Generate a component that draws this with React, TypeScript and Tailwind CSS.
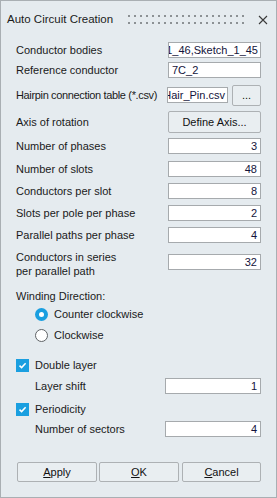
import React from "react";

const font = { fontFamily: '"Liberation Sans", Arial, sans-serif' };

const Field: React.FC<{ value: string; left?: boolean; className?: string }> = ({ value, left, className }) => (
  <div
    className={`h-[16px] shrink-0 border border-[#a6aaad] bg-white flex items-center overflow-hidden whitespace-nowrap text-[11px] text-[#14143c] ${
      left ? "justify-start pl-[3px]" : "justify-end pr-[3px]"
    } ${className ?? "w-[93px]"}`}
  >
    {value}
  </div>
);

const ClipField: React.FC<{ value: string; className: string }> = ({ value, className }) => (
  <div
    className={`h-[16px] shrink-0 border border-[#a6aaad] bg-white flex items-center justify-end overflow-hidden whitespace-nowrap text-[11px] text-[#14143c] pr-[2px] ${className}`}
  >
    {value}
  </div>
);

const Btn: React.FC<{ children: React.ReactNode; className?: string }> = ({ children, className }) => (
  <div
    className={`shrink-0 flex items-center justify-center border border-[#adb1b4] rounded-[2px] bg-[#e9eef1] text-[11px] text-[#111] ${className ?? ""}`}
  >
    {children}
  </div>
);

const Row: React.FC<{ label: string; children: React.ReactNode; className?: string; labelClass?: string }> = ({
  label,
  children,
  className,
  labelClass,
}) => (
  <div className={`flex items-center justify-between ${className ?? ""}`}>
    <span className={`whitespace-nowrap ${labelClass ?? ""}`}>{label}</span>
    {children}
  </div>
);

const Check = () => (
  <div className="w-[13px] h-[13px] bg-[#1a9fe0] flex items-center justify-center">
    <svg width="9" height="9" viewBox="0 0 9 9">
      <path d="M1.5 4.6 L3.6 6.6 L7.6 2.2" fill="none" stroke="white" strokeWidth="1.5" />
    </svg>
  </div>
);

export default function App() {
  return (
    <div
      className="w-[277px] h-[498px] bg-[#e5ebef] border border-[#a9afb3] flex flex-col text-[11px] text-[#1a1a1a] overflow-hidden"
      style={font}
    >
      {/* title bar */}
      <div className="h-[37px] flex items-center pl-[6px] pr-[8px] shrink-0">
        <span className="text-[11.5px] text-[#1b1b1b]">Auto Circuit Creation</span>
        <div className="ml-[15px] grid grid-cols-[repeat(20,2px)] gap-x-[4px] gap-y-[5px]">
          {Array.from({ length: 40 }).map((_, i) => (
            <div key={i} className="w-[2px] h-[2px] bg-[#8c9194]" />
          ))}
        </div>
        <svg className="ml-auto" width="10" height="10" viewBox="0 0 10 10">
          <path d="M1 1 L9 9 M9 1 L1 9" stroke="#3a3a3a" strokeWidth="1.1" />
        </svg>
      </div>

      <div className="flex flex-col px-[15px] pr-[15px]">
        <Row label="Conductor bodies" className="mt-[4px] h-[16px]">
          <ClipField value="Sketch_1_46,Sketch_1_45" className="w-[93px]" />
        </Row>
        <Row label="Reference conductor" className="mt-[4px] h-[16px]">
          <Field value="7C_2" left />
        </Row>
        <Row label="Hairpin connection table (*.csv)" labelClass="tracking-[-0.35px]" className="mt-[6px] h-[22px]">
          <div className="flex items-center gap-[4px] shrink-0">
            <ClipField value="Hair_Pin.csv" className="w-[61px]" />
            <Btn className="w-[29px] h-[21px]">...</Btn>
          </div>
        </Row>
        <Row label="Axis of rotation" className="mt-[5px] h-[22px]">
          <Btn className="w-[93px] h-[22px]">Define Axis...</Btn>
        </Row>
        <Row label="Number of phases" className="mt-[5px] h-[16px]">
          <Field value="3" />
        </Row>
        <Row label="Number of slots" className="mt-[7px] h-[16px]">
          <Field value="48" />
        </Row>
        <Row label="Conductors per slot" className="mt-[6px] h-[16px]">
          <Field value="8" />
        </Row>
        <Row label="Slots per pole per phase" className="mt-[6px] h-[16px]">
          <Field value="2" />
        </Row>
        <Row label="Parallel paths per phase" className="mt-[6px] h-[16px]">
          <Field value="4" />
        </Row>
        <div className="mt-[7px] flex justify-between items-start h-[28px]">
          <span className="leading-[14px]">
            Conductors in series
            <br />
            per parallel path
          </span>
          <Field value="32" className="w-[93px] mt-[4px]" />
        </div>

        <div className="mt-[11px] leading-[14px]">Winding Direction:</div>
        <div className="mt-[3px] h-[16px] flex items-center pl-[19px] gap-[6px]">
          <div className="w-[13px] h-[13px] rounded-full bg-[#1a9fe0] flex items-center justify-center">
            <div className="w-[5px] h-[5px] rounded-full bg-white" />
          </div>
          <span>Counter clockwise</span>
        </div>
        <div className="mt-[5px] h-[16px] flex items-center pl-[19px] gap-[6px]">
          <div className="w-[13px] h-[13px] rounded-full bg-white border border-[#5f6366]" />
          <span>Clockwise</span>
        </div>

        <div className="mt-[14px] h-[16px] flex items-center gap-[6px]">
          <Check />
          <span>Double layer</span>
        </div>
        <Row label="Layer shift" className="mt-[5px] h-[16px] pl-[19px]">
          <Field value="1" className="w-[96px]" />
        </Row>
        <div className="mt-[7px] h-[16px] flex items-center gap-[6px]">
          <Check />
          <span>Periodicity</span>
        </div>
        <Row label="Number of sectors" className="mt-[4px] h-[16px] pl-[19px]">
          <Field value="4" className="w-[96px]" />
        </Row>

        <div className="mt-[25px] flex gap-[2px] pl-[1px]">
          <Btn className="w-[80px] h-[20px]">
            <span><u>A</u>pply</span>
          </Btn>
          <Btn className="w-[80px] h-[20px]">
            <span><u>O</u>K</span>
          </Btn>
          <Btn className="w-[79px] h-[20px] ml-[1px]">
            <span><u>C</u>ancel</span>
          </Btn>
        </div>
      </div>
    </div>
  );
}
